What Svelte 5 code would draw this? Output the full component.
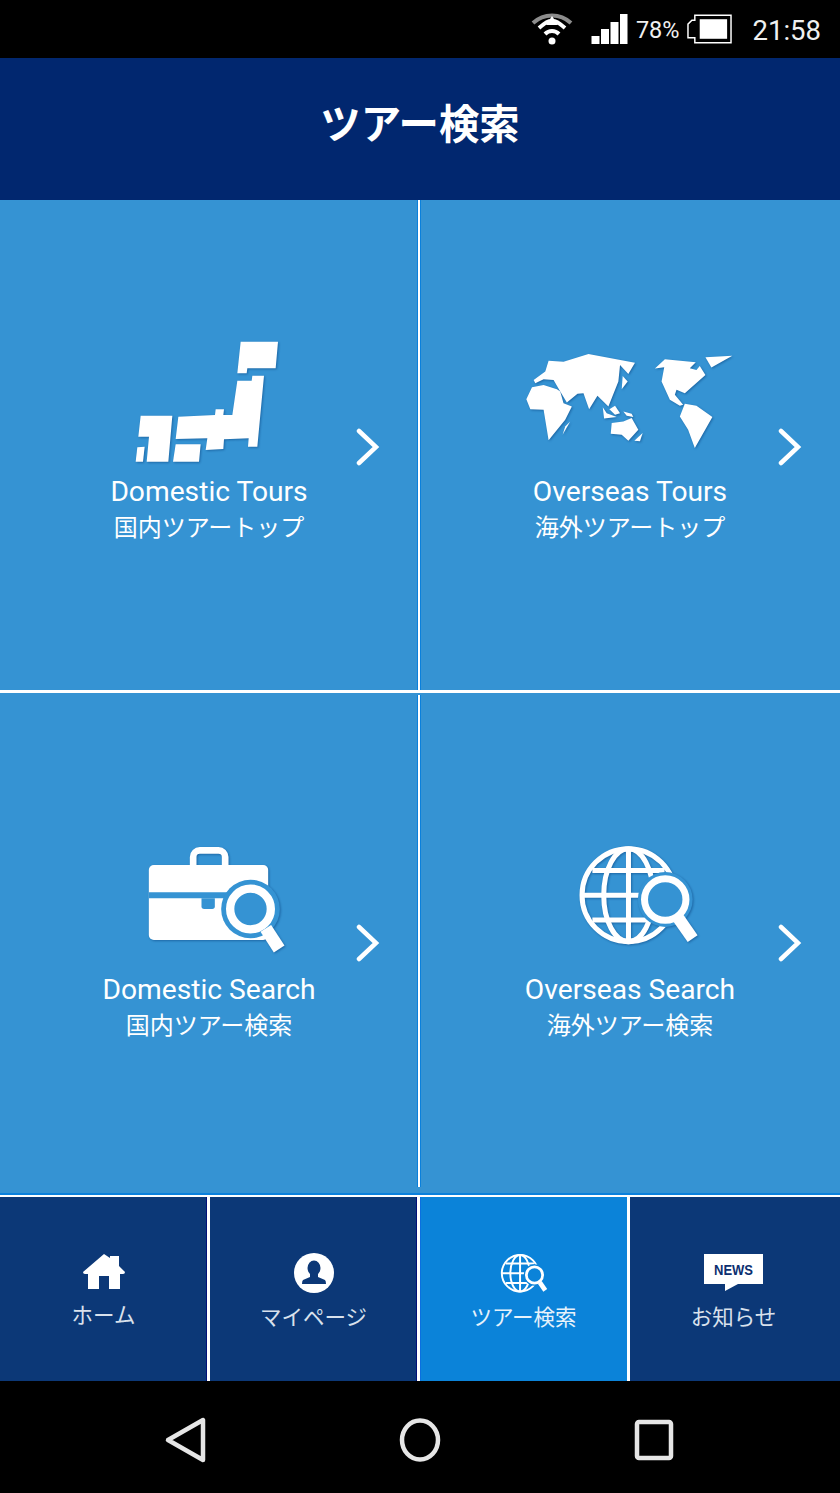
<script>
  const cells = [
    { en: 'Domestic Tours', ja: '国内ツアートップ', icon: 'japan' },
    { en: 'Overseas Tours', ja: '海外ツアートップ', icon: 'world' },
    { en: 'Domestic Search', ja: '国内ツアー検索', icon: 'case' },
    { en: 'Overseas Search', ja: '海外ツアー検索', icon: 'globe' },
  ];

  const tabs = [
    { label: 'ホーム', icon: 'home' },
    { label: 'マイページ', icon: 'user' },
    { label: 'ツアー検索', icon: 'globe', active: true },
    { label: 'お知らせ', icon: 'news' },
  ];

  const japan = [
    '425,65 537,65 530,145 445,145 443,160 415,160',
    '415,182 458,182 460,167 495,167 475,380 447,380 449,355 375,358 373,387 320,390 325,355 230,357 238,290 348,285 350,268 375,268 373,285 400,285',
    '230,373 305,373 300,425 222,425',
    '125,287 220,287 208,425 143,425 150,350 118,350',
    '115,382 137,380 132,425 110,425',
  ];

  const world = [
    '100,150 135,125 145,92 190,95 265,72 405,98 385,132 360,105 355,155 325,230 292,198 267,238 250,190 232,192 220,180 232,192 200,218 180,185 160,150 130,148 105,160',
    '78,208 95,172 130,165 170,178 180,185 190,220 215,230 195,270 145,332 130,240 90,238',
    '210,275 187,315 195,290',
    '368,138 383,155 365,178',
    '308,232 320,250 350,262 312,266',
    '328,238 345,228 360,250 345,255',
    '370,245 395,252 400,262 380,258',
    '335,280 370,275 395,265 415,300 385,333 365,315 332,312',
    '428,310 420,335 403,333',
    '617,82 698,77 635,113',
    '465,116 495,88 588,97 570,115 590,120 600,108 617,135 555,190 530,180 525,195 550,225 540,228 510,210 485,155 493,112',
    '555,222 590,228 638,262 585,355 565,300 540,260',
  ];
</script>

{#snippet globeIcon(cls)}
  <svg class={cls} viewBox="40 30 380 320" aria-hidden="true">
    <g fill="none" stroke="#fff" stroke-width="15">
      <circle cx="200" cy="192" r="139" />
      <ellipse cx="200" cy="192" rx="74" ry="139" />
      <path d="M200 53V331M62 192H338M92 118H308M92 266H308" />
    </g>
    <circle class="halo" cx="310" cy="205" r="82" />
    <circle cx="310" cy="205" r="62" fill="none" stroke="#fff" stroke-width="21" />
    <path d="M350 262L392 322" stroke="#fff" stroke-width="36" />
  </svg>
{/snippet}

<div class="page">
  <div class="status">
    <svg class="wifi" viewBox="0 0 44 36" aria-hidden="true">
      <path d="M3 13C14 3 30 3 41 13" fill="none" stroke="#8c8c8c" stroke-width="4" />
      <path d="M9 18C16 12 18 11 22 11C26 11 28 12 35 18M15 24C19 20 25 20 29 24" fill="none" stroke="#fff" stroke-width="4" />
      <path d="M22 6L28 15H16Z" fill="#fff" />
      <circle cx="22" cy="31" r="3.5" fill="#fff" />
    </svg>
    <svg class="signal" viewBox="0 0 36 30" aria-hidden="true">
      <path d="M0 22H8V30H0ZM9.500 15H17.500V30H9.500ZM19 8H27V30H19ZM28.500 0H36V30H28.500Z" fill="#fff" />
    </svg>
    <span class="pct">78%</span>
    <svg class="battery" viewBox="0 0 46 30" aria-hidden="true">
      <path d="M5 6H8V1H45V29H8V24H1V10Z" fill="none" stroke="#fff" stroke-width="1.500" />
      <rect x="13" y="5" width="28" height="20" fill="#fff" />
    </svg>
    <span class="time">21:58</span>
  </div>

  <header class="title"><h1>ツアー検索</h1></header>

  <main class="grid">
    {#each cells as c}
      <div class="cell">
        <div class="art">
          {#if c.icon === 'japan'}
            <svg class="ico japan" viewBox="90 45 480 390" aria-hidden="true">
              {#each japan as p}<polygon points={p} fill="#fff" />{/each}
            </svg>
          {:else if c.icon === 'world'}
            <svg class="ico world" viewBox="60 60 660 310" aria-hidden="true">
              {#each world as p}<polygon points={p} fill="#fff" />{/each}
            </svg>
          {:else if c.icon === 'case'}
            <svg class="ico case" viewBox="40 40 440 330" aria-hidden="true">
              <rect x="190" y="56" width="96" height="70" rx="20" fill="none" stroke="#fff" stroke-width="20" />
              <rect x="57" y="100" width="358" height="225" rx="15" fill="#fff" />
              <path d="M57 191H300" class="gap" stroke-width="18" />
              <path d="M215 200V224Q215 232 223 232H247Q255 232 255 224V200Z" class="notch" />
              <circle class="halo" cx="362" cy="232" r="88" />
              <circle cx="362" cy="232" r="61" fill="none" stroke="#fff" stroke-width="25" />
              <path d="M408 290L448 352" stroke="#fff" stroke-width="38" />
            </svg>
          {:else}
            {@render globeIcon('ico globe')}
          {/if}
        </div>
        <div class="en">{c.en}</div>
        <div class="ja">{c.ja}</div>
        <svg class="chev" viewBox="0 0 24 38" aria-hidden="true">
          <path d="M3 3L20 19L3 35" fill="none" stroke="#fff" stroke-width="4.500" stroke-linecap="round" stroke-linejoin="miter" />
        </svg>
      </div>
    {/each}
  </main>

  <nav class="tabs">
    {#each tabs as t}
      <div class="tab" class:active={t.active} class:home={t.icon === 'home'}>
        <div class="tab-ico">
          {#if t.icon === 'home'}
            <svg width="42" height="36" viewBox="0 0 42 36" aria-hidden="true">
              <path d="M21 0L27 4V2H36V12L42 18Q42 20 40 20H37V35H26V22H16V35H5V20H2Q0 20 0 18Z" fill="#fff" />
            </svg>
          {:else if t.icon === 'user'}
            <svg width="42" height="40" viewBox="0 0 42 40" aria-hidden="true">
              <circle cx="21" cy="20" r="20" fill="#fff" />
              <ellipse cx="21" cy="15" rx="6.500" ry="7.500" fill="#0c3877" />
              <path d="M17 21H25V24L32 27Q33 28 33 31H9Q9 28 10 27L17 24Z" fill="#0c3877" />
            </svg>
          {:else if t.icon === 'globe'}
            {@render globeIcon('tab-globe')}
          {:else}
            <svg width="60" height="38" viewBox="0 0 60 38" aria-hidden="true">
              <path d="M0 0H59V30H34L21 37V30H0Z" fill="#fff" />
              <text x="29.500" y="20.500" text-anchor="middle" class="news" textLength="39" lengthAdjust="spacingAndGlyphs">NEWS</text>
            </svg>
          {/if}
        </div>
        <span>{t.label}</span>
      </div>
    {/each}
  </nav>

  <div class="sysnav">
    <svg viewBox="0 0 60 60" aria-hidden="true">
      <path d="M12 30L47 10V50Z" class="sys" stroke-linejoin="round" />
    </svg>
    <svg viewBox="0 0 60 60" aria-hidden="true">
      <ellipse cx="30" cy="30" rx="18" ry="19.500" class="sys" />
    </svg>
    <svg viewBox="0 0 60 60" aria-hidden="true">
      <rect x="13" y="12" width="34" height="36" rx="2" class="sys" />
    </svg>
  </div>
</div>

<style>
  :global(body) {
    margin: 0;
    background: #000;
  }

  .page {
    width: 840px;
    height: 1493px;
    display: flex;
    flex-direction: column;
    overflow: hidden;
    font-family: Roboto, "Noto Sans CJK JP", sans-serif;
    color: #fff;
  }

  .status {
    height: 58px;
    background: #000;
    display: flex;
    align-items: center;
    padding-right: 19px;
    justify-content: flex-end;
    color: #f0f0f0;
  }
  .wifi { width: 44px; height: 36px; margin-right: 17px; margin-top: -3px; }
  .signal { width: 37px; height: 30px; margin-right: 8px; margin-top: -1px; }
  .pct { font-size: 23.500px; margin-right: 7px; margin-top: 2px; }
  .battery { width: 45px; height: 30px; margin-right: 21px; margin-top: -1px; }
  .time { font-size: 27.500px; margin-top: 3px; }

  .title {
    height: 142px;
    background: #01276f;
    display: flex;
    align-items: center;
    justify-content: center;
  }
  .title h1 {
    margin: 0;
    font-size: 40.400px;
    font-weight: 700;
    font-family: "Noto Sans CJK JP", sans-serif;
    line-height: 1;
    margin-top: -13px;
  }

  .grid {
    height: 995px;
    box-sizing: border-box;
    background: #3593d3;
    display: grid;
    grid-template-columns: 420px 420px;
    grid-template-rows: 493px 492px;
    row-gap: 2px;
    border-bottom: 2px solid #0a80dc;
  }

  .cell {
    position: relative;
    display: flex;
    flex-direction: column;
    align-items: center;
    box-sizing: border-box;
    background: #3593d3;
  }
  .cell:nth-child(odd) { border-right: 2px solid #fff; box-shadow: inset -1px 0 0 #0a80dc; }
  .cell:nth-child(even) { box-shadow: inset 1px 0 0 #0a80dc; }
  .cell:nth-child(-n+2) { border-bottom: 3px solid #fff; }

  .art {
    height: 130px;
    margin-top: 140px;
    display: flex;
    align-items: flex-end;
    justify-content: center;
    color: #3593d3;
  }
  .cell:nth-child(n+3) .art { margin-top: 146px; height: 127px; }

  .ico {
    width: 160px;
    height: 130px;
    flex-shrink: 0;
    filter: drop-shadow(1px 1px 1px rgba(0, 50, 110, 0.45));
  }
  .japan { margin-bottom: 5px; }
  .world { width: 220px; height: 103px; margin-bottom: 17px; }
  .case { width: 147px; height: 110px; margin-bottom: 13px; margin-left: 15px; }
  .globe { width: 127px; height: 107px; margin-bottom: 20px; margin-left: 17px; }

  .halo { fill: currentColor; }
  .gap { stroke: #3593d3; fill: none; }
  .notch { fill: #3593d3; }

  .en {
    font-size: 28.200px;
    line-height: 32px;
    margin-top: 6px;
  }
  .ja {
    font-size: 24px;
    line-height: 32px;
    margin-top: 2px;
    font-family: "Noto Sans CJK JP", sans-serif;
  }

  .chev {
    position: absolute;
    right: 38px;
    top: 50%;
    width: 24px;
    height: 38px;
    margin-top: -17px;
  }

  .tabs {
    height: 186px;
    display: grid;
    grid-template-columns: 210px 210px 210px 210px;
    border-top: 2px solid #fff;
    box-sizing: border-box;
    background: #0c3877;
  }
  .tab {
    display: flex;
    flex-direction: column;
    align-items: center;
    border-right: 3px solid #fff;
    box-sizing: border-box;
    font-family: "Noto Sans CJK JP", sans-serif;
    font-size: 21.500px;
    color: #d9e1ec;
    box-shadow: inset -1px 0 0 #000f7a;
  }
  .tab:last-child { border-right: 0; box-shadow: none; padding-right: 3px; }
  .tab.active {
    background: #0b83d9;
    color: #e6f2fb;
    box-shadow: inset 1px 0 0 #0a70e0;
  }
  .tab-ico {
    height: 40px;
    margin-top: 56px;
    display: flex;
    align-items: center;
    justify-content: center;
    color: #0b83d9;
  }
  .tab.home .tab-ico { margin-top: 57px; height: 36px; }
  .tab span { margin-top: 7px; line-height: 32px; }
  .tab.home span { margin-top: 8px; }

  .tab-globe { width: 50px; height: 42px; flex-shrink: 0; }

  .news {
    font-family: "Liberation Sans", sans-serif;
    font-weight: 700;
    font-size: 15px;
    fill: #0c2f70;
  }

  .sysnav {
    height: 112px;
    background: #000;
    display: flex;
    align-items: center;
    justify-content: center;
    gap: 174px;
    padding-top: 6px;
    box-sizing: border-box;
  }
  .sysnav svg { width: 60px; height: 60px; }
  .sys { fill: none; stroke: #e6e6e6; stroke-width: 4.500; }
</style>
